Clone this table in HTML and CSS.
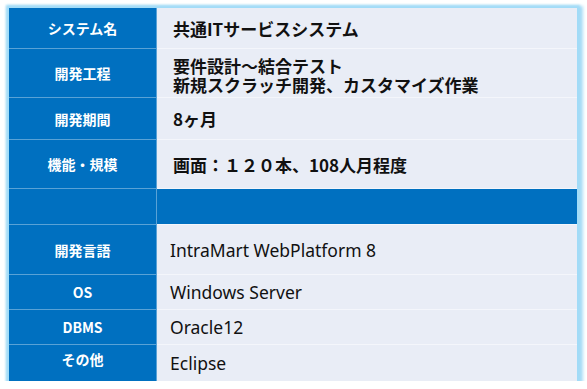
FILE: index.html
```html
<!DOCTYPE html>
<html lang="ja">
<head>
<meta charset="utf-8">
<title>共通ITサービスシステム</title>
<link rel="stylesheet" href="styles.css">
</head>
<body>
<div class="card">
  <div class="row h41"><div class="label">システム名</div><div class="value bold">共通ITサービスシステム</div></div>
  <div class="row h49"><div class="label">開発工程</div><div class="value bold two"><span>要件設計～結合テスト</span><span>新規スクラッチ開発、カスタマイズ作業</span></div></div>
  <div class="row h42"><div class="label">開発期間</div><div class="value bold">8ヶ月</div></div>
  <div class="row h49"><div class="label">機能・規模</div><div class="value bold">画面：１２０本、108人月程度</div></div>
  <div class="row h36 band"><div class="label"></div><div class="value"></div></div>
  <div class="row h50"><div class="label">開発言語</div><div class="value plain">IntraMart WebPlatform 8</div></div>
  <div class="row h35"><div class="label">OS</div><div class="value plain">Windows Server</div></div>
  <div class="row h35"><div class="label">DBMS</div><div class="value plain">Oracle12</div></div>
  <div class="row h36 last"><div class="label top">その他</div><div class="value plain">Eclipse</div></div>
</div>
</body>
</html>
```
FILE: styles.css
```css
html, body {
  margin: 0;
  padding: 0;
  background: #ffffff;
}
body {
  font-family: "Noto Sans", "Noto Sans CJK JP", sans-serif;
}
.card {
  margin: 8px 0 0 9px;
  width: 568px;
  display: flex;
  flex-direction: column;
  background: #e9edf6;
  box-shadow: 0 0 2px 3px rgba(160, 218, 246, 0.9), 2px 2px 3px 4px rgba(150, 214, 245, 0.8);
}
.row {
  display: grid;
  grid-template-columns: 148px 1fr;
  box-sizing: border-box;
  border-bottom: 1px solid rgba(255, 255, 255, 0.5);
}
.row.last { border-bottom: none; }
.h41 { height: 41px; }
.h49 { height: 49px; }
.h42 { height: 42px; }
.h36 { height: 36px; }
.h50 { height: 50px; }
.h35 { height: 35px; }
.label {
  background: #0070c0;
  color: #ffffff;
  font-family: "Noto Sans CJK JP", "Noto Sans", sans-serif;
  font-weight: 700;
  font-size: 14px;
  display: flex;
  align-items: center;
  justify-content: center;
  border-right: 1px solid rgba(255, 255, 255, 0.35);
  margin-bottom: -1px;
  border-bottom: 1px solid rgba(255, 255, 255, 0.35);
}
.row.last .label { margin-bottom: 0; border-bottom: none; }
.label.top { align-items: flex-start; padding-top: 4px; }
.value {
  display: flex;
  align-items: center;
  color: #111111;
  padding-left: 16px;
}
.value.bold {
  font-family: "Noto Sans CJK JP", sans-serif;
  font-weight: 700;
  font-size: 17px;
  line-height: 19px;
}
.value.two {
  flex-direction: column;
  align-items: flex-start;
  justify-content: center;
  padding-top: 3px;
}
.value.plain {
  font-family: "Noto Sans", "Noto Sans CJK JP", sans-serif;
  font-size: 17.5px;
  padding-left: 13px;
}
.band .value { background: #0070c0; }
```
